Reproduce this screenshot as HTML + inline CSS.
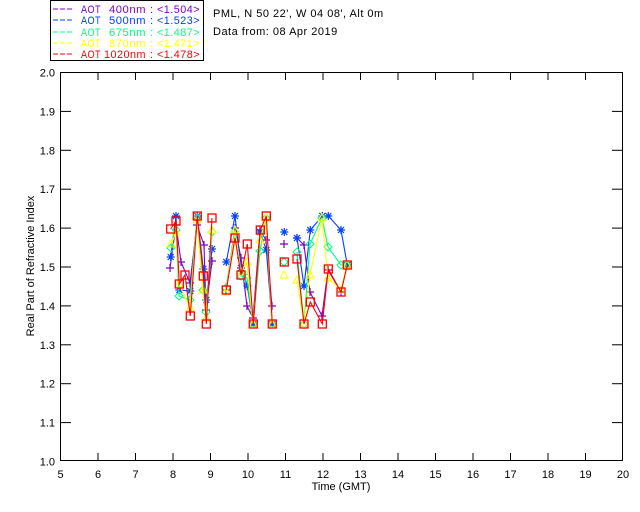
<!DOCTYPE html>
<html><head><meta charset="utf-8"><style>
html,body{margin:0;padding:0;background:#fff;width:640px;height:512px;overflow:hidden}
svg{display:block}
text{font-family:"Liberation Sans",sans-serif;font-size:11px}
.lg text{letter-spacing:0.5px}
</style></head><body>
<svg id="s" width="640" height="512" xmlns="http://www.w3.org/2000/svg">
<rect x="50.5" y="0.5" width="153" height="60" fill="#fff" stroke="#000"/>
<g class="lg" id="lg">
<text x="213" y="17" fill="#000">PML, N 50 22', W 04 08', Alt 0m</text>
<text x="213" y="35" fill="#000">Data from: 08 Apr 2019</text>
</g>
<rect x="60.5" y="72.5" width="562" height="388" fill="none" stroke="#000"/>
<text x="341" y="490" text-anchor="middle">Time (GMT)</text>
<text transform="translate(34,266) rotate(-90)" text-anchor="middle">Real Part of Refractive Index</text>
<g id="ax"></g>
<g id="d"></g>
</svg>
<script>
var ns="http://www.w3.org/2000/svg",ax=document.getElementById('ax'),d=document.getElementById('d'),lg=document.getElementById('lg');
function el(t,a,p){var e=document.createElementNS(ns,t);for(var k in a)e.setAttribute(k,a[k]);(p||ax).appendChild(e);return e;}
[['#8000c0','400nm','<1.504>',9],['#0040ff','500nm','<1.523>',20],['#00ff80','675nm','<1.487>',32],['#ffff00','870nm','<1.471>',43],['#ff0000','1020nm','<1.478>',54]].forEach(function(r){
 var c=r[0],y=r[3],w=r[1].length>5?42:37;
 el('line',{x1:53,y1:y,x2:74,y2:y,stroke:c,'stroke-dasharray':'5,2'},lg);
 el('text',{x:81,y:y+4,fill:c,textLength:20,lengthAdjust:'spacingAndGlyphs'},lg).textContent='AOT';
 el('text',{x:146-w,y:y+4,fill:c,textLength:w,lengthAdjust:'spacingAndGlyphs'},lg).textContent=r[1];
 el('text',{x:150,y:y+4,fill:c},lg).textContent=':';
 el('text',{x:157,y:y+4,fill:c,textLength:43,lengthAdjust:'spacingAndGlyphs'},lg).textContent=r[2];
});
for(var h=5;h<=20;h++){var x=60.5+(h-5)*37.5;
 if(h>5&&h<20){el('line',{x1:x,y1:461,x2:x,y2:453,stroke:'#000'});el('line',{x1:x,y1:72,x2:x,y2:80,stroke:'#000'});}
 var t=el('text',{x:x,y:478,'text-anchor':'middle'});t.textContent=h;}
for(var i=0;i<=10;i++){var y=461-i*38.9+0.5;
 if(i>0&&i<10){el('line',{x1:60,y1:y,x2:71,y2:y,stroke:'#000'});el('line',{x1:623,y1:y,x2:612,y2:y,stroke:'#000'});}
 var t=el('text',{x:55,y:y+4,'text-anchor':'end'});t.textContent=(1+i/10).toFixed(1);}
var S=[
['#8000c0','p',[[170,268],[176,225],[181,262],[190,283],[197,225],[204,245],[206,310],[212,261],null,[226,290],[235,228],[241,258],[247,306],[253,318],[260,230],[266,240],[272,306],null,[284,244],null,[297,238],[304,245],[310,292],[322,316],[328,270],[341,292],[347,265]]],
['#0040ff','a',[[170.7,257],[176,216],[179.3,290],[190.3,291],[197.3,216],[203.3,269],[206.3,300],[212,249],null,[226.3,262],[235,216],[241,268],[247.3,286],[253.3,324],[260,232],[266.3,250],[272.3,324],null,[284.3,232],null,[297,238],[304,286],[310.3,230],[322.3,216],[328.3,216],[341,230],[347.3,265]]],
['#00ff80','g',[[171,248],[176,230],[179,296],[190,300],[197,218],[203,290],[206,312],[212,232],null,[226,288],[235,232],[241,276],[247,278],[253,324],[260,251],[266,218],[272,324],null,[284,262],null,[297,252],[304,324],[310,244],[322,218],[328,247],[341,265],[347,265]]],
['#ffff00','t',[[171,244],[176,232],[179,284],[190,308],[197,220],[203,290],[206,318],[212,230],null,[226,292],[235,230],[241,272],[247,262],[253,324],[260,240],[266,218],[272,324],null,[284,275],null,[297,280],[304,324],[310,275],[322,218],[328,278],[341,290],[347,265]]],
['#ff0000','s',[[170.7,229],[176,221],[179.3,284],[185,275],[190.3,316],[197.3,216],[203.3,276],[206.3,324],[212,218],null,[226.3,290],[235,238],[241,275],[247.3,244],[253.3,324],[260.3,230],[266.3,216],[272.3,324],null,[284.3,262],null,[297,259],[304,324],[310.3,302],[322.3,324],[328.3,269],[341,292],[347.3,265]]]];
S.forEach(function(s){var c=s[0],m=s[1],pts=s[2],seg=[];
 function flush(){if(seg.length>1)el('polyline',{points:seg.map(function(p){return p.join(',')}).join(' '),fill:'none',stroke:c,'stroke-width':1.1},d);seg=[];}
 pts.forEach(function(p){if(!p){flush();return;}seg.push(p);});flush();
 pts.forEach(function(p){if(!p)return;var x=p[0],y=p[1];
  if(m=='s')el('rect',{x:x-4,y:y-4,width:8,height:8,fill:'none',stroke:c,'stroke-width':1.3},d);
  else if(m=='t')el('polygon',{points:(x-4)+','+(y+3)+' '+(x+4)+','+(y+3)+' '+x+','+(y-4),fill:'none',stroke:c},d);
  else if(m=='g')el('polygon',{points:x+','+(y-4)+' '+(x+4)+','+y+' '+x+','+(y+4)+' '+(x-4)+','+y,fill:'none',stroke:c},d);
  else if(m=='p'){el('path',{d:'M'+(x-4)+' '+y+'h8M'+x+' '+(y-4)+'v8',stroke:c,'stroke-width':1.2},d);}
  else el('path',{d:'M'+(x-4)+' '+y+'h8M'+x+' '+(y-4)+'v8M'+(x-3)+' '+(y-3)+'l6 6M'+(x+3)+' '+(y-3)+'l-6 6',stroke:c,'stroke-width':1.2},d);
 });
});
</script>
</body></html>
